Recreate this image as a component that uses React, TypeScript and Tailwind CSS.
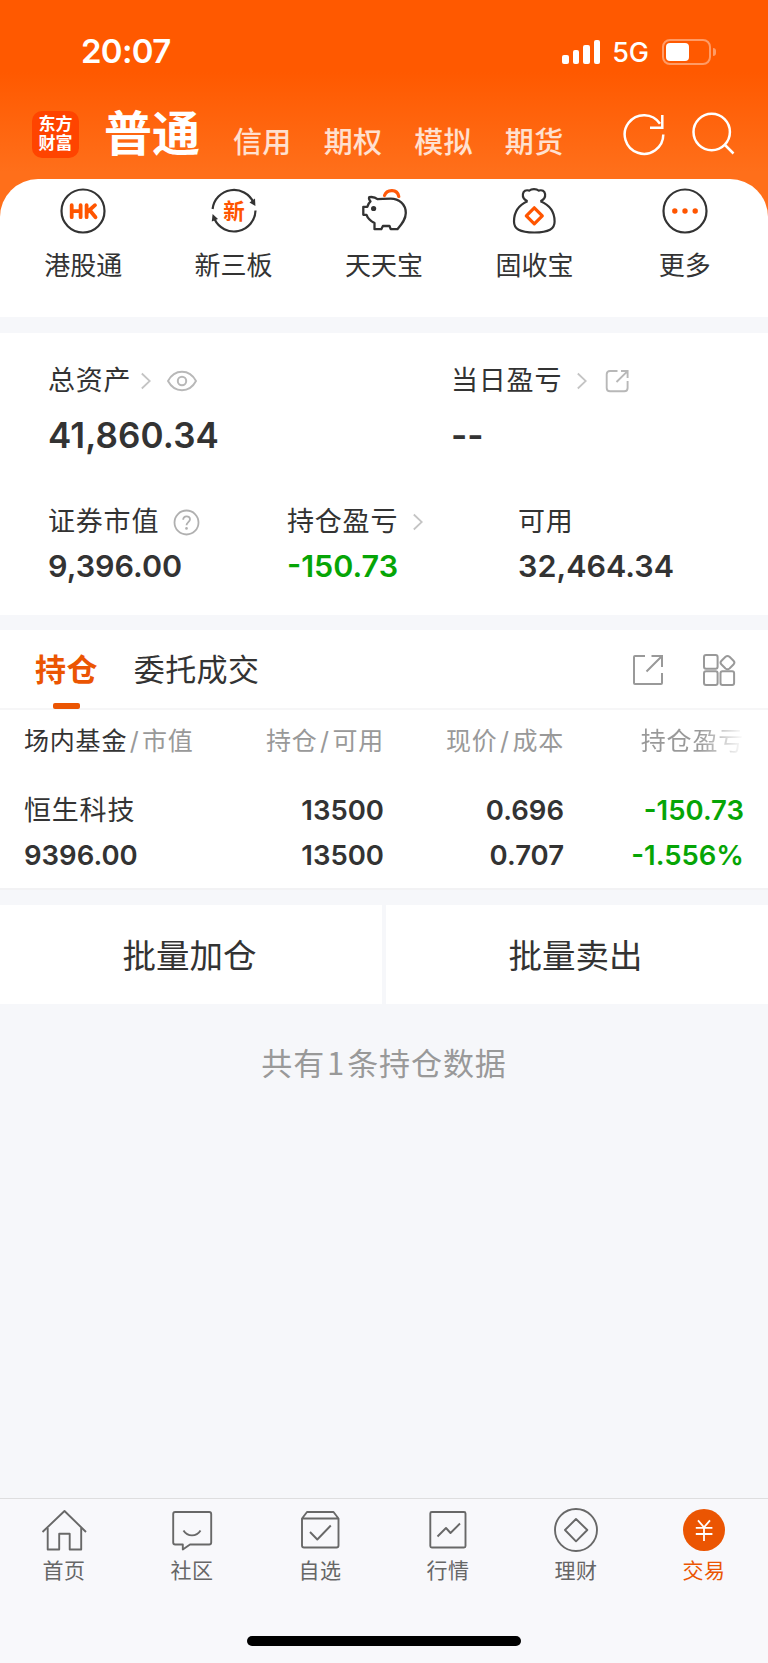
import type { ReactNode } from "react";
import clsx from "clsx";

const shortcuts = [
  { label: "港股通", icon: <HkIcon /> },
  { label: "新三板", icon: <NewBoardIcon /> },
  { label: "天天宝", icon: <PiggyIcon /> },
  { label: "固收宝", icon: <MoneyBagIcon /> },
  { label: "更多", icon: <MoreIcon /> },
];

const accountTabs = ["信用", "期权", "模拟", "期货"];

const navItems = [
  { label: "首页", icon: <HomeIcon /> },
  { label: "社区", icon: <CommunityIcon /> },
  { label: "自选", icon: <WatchlistIcon /> },
  { label: "行情", icon: <MarketIcon /> },
  { label: "理财", icon: <WealthIcon /> },
  { label: "交易", icon: <TradeIcon />, active: true },
];

const holdings = [
  {
    name: "恒生科技",
    marketValue: "9396.00",
    amount: "13500",
    available: "13500",
    price: "0.696",
    cost: "0.707",
    profit: "-150.73",
    profitRate: "-1.556%",
  },
];

function HkIcon() {
  return (
    <svg width="48" height="48" viewBox="0 0 48 48" fill="none">
      <circle cx="24" cy="24" r="21.5" stroke="#333" strokeWidth="2.2" />
      <path
        d="M12.7 18.2v12M21.6 18.2v12M12.7 24.2h8.9M27.6 18.2v12M36 18.2l-8.2 7.300M31 23.500l5.500 6.700"
        stroke="#ff5500"
        strokeWidth="3.8"
        strokeLinecap="round"
      />
    </svg>
  );
}

function NewBoardIcon() {
  return (
    <svg width="48" height="48" viewBox="0 0 48 48" fill="none">
      <path d="M2.6 22A21.5 21.5 0 0 1 43.5 15.5" stroke="#333" strokeWidth="2.2" />
      <path d="M45.5 23.5A21.5 21.5 0 0 1 4.5 32" stroke="#333" strokeWidth="2.2" />
      <path d="m39.5 15.5 5.5-4 .4 7.5z" fill="#333" />
      <path d="m1.800 34.500.8-7.500 5.400 5z" fill="#333" />
      <text
        x="24"
        y="31.5"
        textAnchor="middle"
        fontSize="21.5"
        fontWeight="700"
        fill="#ff5500"
      >
        新
      </text>
    </svg>
  );
}

function PiggyIcon() {
  return (
    <svg width="48" height="48" viewBox="0 0 48 48" fill="none">
      <path
        d="M17.500 12.200C15 10 12.500 9.600 9.200 10.200c-.8 1.600.2 2.800 1.300 4.200-1.800 1.600-2.600 3.400-3.200 5.400H3.300v8h3.200c1 2.900 3.500 5.700 8 8.300v6.100h6.800l1.600-3.200h6.600l1.200 3.200h6.800C41.500 37.500 45.800 32.500 45.800 26c0-9-7.200-14.400-15-14.400-5 0-9.100 0-13.300.6Z"
        stroke="#333"
        strokeWidth="2.3"
        strokeLinejoin="round"
      />
      <circle cx="13.6" cy="21.5" r="2.6" fill="#333" />
      <path
        d="M24.500 8.500c2-5.600 12.500-7.500 14.300 1"
        stroke="#ff5a0a"
        strokeWidth="3.2"
        strokeLinecap="round"
      />
    </svg>
  );
}

function MoneyBagIcon() {
  return (
    <svg width="48" height="48" viewBox="0 0 48 48" fill="none">
      <path
        d="M17.500 14.300c-3.500-1.600-5-4-4.600-7.100.4-3.600 3-4.600 6.600-3.600 2-2.100 7-2.100 9 0 3.600-1 6.200 0 6.600 3.600.4 3.100-1.100 5.500-4.600 7.100"
        stroke="#333"
        strokeWidth="2.2"
        strokeLinejoin="round"
      />
      <path
        d="M17.500 14.300C8 18.500 4 25.500 4 34.500 4 42 9.500 45.500 24.300 45.500S44.600 42 44.600 34.500c0-9-4-16-14.100-20.200"
        stroke="#333"
        strokeWidth="2.2"
      />
      <path
        d="m24.300 20.800 8 8-8 8-8-8z"
        stroke="#ff5500"
        strokeWidth="3.2"
        strokeLinejoin="round"
      />
    </svg>
  );
}

function MoreIcon() {
  return (
    <svg width="48" height="48" viewBox="0 0 48 48" fill="none">
      <circle cx="24" cy="24" r="21.5" stroke="#333" strokeWidth="2.2" />
      <circle cx="13.8" cy="24" r="2.7" fill="#ff5500" />
      <circle cx="24" cy="24" r="2.7" fill="#ff5500" />
      <circle cx="34.2" cy="24" r="2.7" fill="#ff5500" />
    </svg>
  );
}

function Chevron() {
  return (
    <svg width="10" height="18" viewBox="0 0 10 18" fill="none">
      <path d="m.8 1.500 8 7.500-8 7.500" stroke="#c4c4c4" strokeWidth="1.8" />
    </svg>
  );
}

function EyeIcon() {
  return (
    <svg width="30" height="22" viewBox="0 0 30 22" fill="none" stroke="#b8b8b8">
      <path
        d="M1 11C4.500 4.500 9.500 1.800 15 1.800S25.500 4.500 29 11c-3.500 6.500-8.500 9.200-14 9.200S4.500 17.500 1 11Z"
        strokeWidth="1.9"
        strokeLinejoin="round"
      />
      <circle cx="15" cy="11" r="4.2" strokeWidth="2" />
    </svg>
  );
}

function ShareIcon() {
  return (
    <svg width="24" height="24" viewBox="0 0 24 24" fill="none" stroke="#b8b8b8" strokeWidth="1.9">
      <path d="M12.500 2H5Q1.700 2 1.700 5.300V19Q1.700 22.300 5 22.300H19.300Q22.600 22.300 22.600 19V12" />
      <path d="M16 2h6.600v7M22.300 2.300 11.500 13" />
    </svg>
  );
}

function HelpIcon() {
  return (
    <svg width="27" height="27" viewBox="0 0 27 27" fill="none" stroke="#b0b0b0">
      <circle cx="13.5" cy="13.5" r="12" strokeWidth="1.8" />
      <path
        d="M10.200 10.800c0-4.600 6.800-4.600 6.800-.5 0 2.700-3.500 3-3.500 6"
        strokeWidth="1.8"
      />
      <circle cx="13.5" cy="19.4" r="1.3" fill="#b0b0b0" stroke="none" />
    </svg>
  );
}

function OpenIcon() {
  return (
    <svg width="32" height="32" viewBox="0 0 32 32" fill="none" stroke="#999" strokeWidth="2">
      <path d="M13 2H3Q2 2 2 3v26q0 1 1 1h26q1 0 1-1V19" />
      <path d="M19.500 2H30v11M30 2 14.500 17.500" />
    </svg>
  );
}

function GridIcon() {
  return (
    <svg width="34" height="34" viewBox="0 0 34 34" fill="none" stroke="#999" strokeWidth="2">
      <rect x="2" y="2" width="13.6" height="13.8" rx="2" />
      <rect x="2" y="18.2" width="13.6" height="13.8" rx="2" />
      <rect x="18.5" y="18.2" width="13.6" height="13.8" rx="2" />
      <path d="m27.500 3.700 4 4q1.900 1.900 0 3.800l-4 4q-2 1.500-4 0l-4-4q-1.900-1.900 0-3.800l4-4q2-1.500 4 0Z" />
    </svg>
  );
}

function NavSvg({ children }: { children: ReactNode }) {
  return (
    <svg
      width="46"
      height="46"
      viewBox="0 0 46 46"
      fill="none"
      stroke="#686868"
      strokeWidth="1.9"
      strokeLinejoin="round"
    >
      {children}
    </svg>
  );
}

function HomeIcon() {
  return (
    <NavSvg>
      <path d="M1.500 25 23.500 4 45 25" />
      <path d="M6.700 21v21.500h11.500V26.700h10.500v15.800h11.500V21" />
    </NavSvg>
  );
}

function CommunityIcon() {
  return (
    <NavSvg>
      <path d="M6.200 5h34q2 0 2 2v28.500q0 2-2 2H21L13.800 42.500v-5H6.200q-2 0-2-2V7q0-2 2-2Z" />
      <path d="M14.500 23.500c4 6.500 13 6.500 17 0" />
    </NavSvg>
  );
}

function WatchlistIcon() {
  return (
    <NavSvg>
      <path d="M5 11.500 10 5h26.500l5 6.500v27q0 2-2 2H7q-2 0-2-2ZM5 11.500h36.500" />
      <path d="m13 25 7.300 7.500L33.800 18.500" />
    </NavSvg>
  );
}

function MarketIcon() {
  return (
    <NavSvg>
      <rect x="5.3" y="5" width="35.2" height="35.5" rx="1.5" />
      <path d="m12.500 29.500 8.500-8.500 4.500 5L35 16.500" />
    </NavSvg>
  );
}

function WealthIcon() {
  return (
    <NavSvg>
      <circle cx="23" cy="23" r="21" />
      <path d="M23 12 34.300 23 23 34.300 12 23Z" />
    </NavSvg>
  );
}

function TradeIcon() {
  return (
    <svg width="46" height="46" viewBox="0 0 46 46" fill="none">
      <circle cx="23" cy="23" r="21" fill="#eb5502" />
      <path
        d="m17 13.300 6 7 6-7M23 20.300V34M14.800 20.800h16.600M14.800 27h16.600"
        stroke="#fff"
        strokeWidth="1.8"
      />
    </svg>
  );
}

function StatusBar() {
  return (
    <div className="flex h-[104px] items-center justify-between pr-[52px] pl-[81px]">
      <span className="text-[33px] font-semibold tracking-[-0.7px]">20:07</span>
      <div className="flex items-center">
        <div className="flex items-end gap-1">
          <i className="h-[9px] w-[6.5px] rounded-[2px] bg-white" />
          <i className="h-[14px] w-[6.5px] rounded-[2px] bg-white" />
          <i className="h-[19px] w-[6.5px] rounded-[2px] bg-white" />
          <i className="h-6 w-[6.5px] rounded-[2px] bg-white" />
        </div>
        <span className="ml-3 text-[27px] leading-none font-medium">5G</span>
        <div className="ml-[13px] h-[26px] w-[49px] rounded-lg border-2 border-white/40 p-[2px]">
          <div className="h-full w-[23px] rounded-[4px] bg-white" />
        </div>
        <div className="ml-[2px] h-2 w-[3px] rounded-r-full bg-white/40" />
      </div>
    </div>
  );
}

function Header() {
  return (
    <header className="h-[220px] bg-[linear-gradient(#ff5900_0,#ff5900_72px,#ff6f1a_172px,#ff6f1a_100%)] text-white">
      <StatusBar />
      <div className="flex h-[60px] items-center">
        <div className="ml-8 flex h-[47px] w-[47px] flex-col justify-center rounded-[10px] bg-[#ff4400] text-center text-[17px] leading-[19.5px] font-bold">
          <span>东方</span>
          <span>财富</span>
        </div>
        <h1 className="ml-[25px] text-[48px] leading-[60px] font-bold">普通</h1>
        <nav className="mt-[17px] ml-[33px] flex gap-8 text-[29px] leading-[34px] font-medium tracking-[0.3px] text-white/80">
          {accountTabs.map((tab) => (
            <span key={tab}>{tab}</span>
          ))}
        </nav>
        <svg className="ml-[59px]" width="44" height="46" viewBox="0 0 44 46" fill="none" stroke="#fff" strokeWidth="2.5">
          <path d="M41.300 23.500A19.300 19.300 0 1 1 38 12.700" />
          <path d="M40.300 4v12.800H28" />
        </svg>
        <svg className="ml-[25px]" width="46" height="46" viewBox="0 0 46 46" fill="none" stroke="#fff" strokeWidth="2.5">
          <circle cx="20.7" cy="21" r="18.2" />
          <path d="m33.500 33.500 9 9" />
        </svg>
      </div>
    </header>
  );
}

function Label({ text, children }: { text: string; children?: ReactNode }) {
  return (
    <div className="flex h-8 items-center text-[27px] tracking-[0.8px]">
      <span>{text}</span>
      {children}
    </div>
  );
}

function Assets() {
  return (
    <section className="mt-4 h-[282px] bg-white pt-8 pl-12">
      <div className="flex">
        <div className="w-[403px]">
          <Label text="总资产">
            <span className="ml-[10px]"><Chevron /></span>
            <span className="ml-4"><EyeIcon /></span>
          </Label>
          <p className="mt-[18px] text-[35px] leading-[40px] font-semibold tracking-[0.1px]">41,860.34</p>
        </div>
        <div>
          <Label text="当日盈亏">
            <span className="ml-[15px]"><Chevron /></span>
            <span className="ml-[18px]"><ShareIcon /></span>
          </Label>
          <p className="mt-[18px] text-[35px] leading-[40px] font-semibold">--</p>
        </div>
      </div>
      <div className="mt-[51px] flex">
        <div className="w-[239px]">
          <Label text="证券市值">
            <span className="ml-[14px]"><HelpIcon /></span>
          </Label>
          <p className="mt-[10px] text-[30.5px] leading-[36px] font-semibold">9,396.00</p>
        </div>
        <div className="w-[231px]">
          <Label text="持仓盈亏">
            <span className="ml-[15px]"><Chevron /></span>
          </Label>
          <p className="mt-[10px] text-[30.5px] leading-[36px] font-semibold text-[#06a506]">-150.73</p>
        </div>
        <div>
          <Label text="可用" />
          <p className="mt-[10px] text-[30.5px] leading-[36px] font-semibold">32,464.34</p>
        </div>
      </div>
    </section>
  );
}

function Slash() {
  return <span className="px-[2.5px]">/</span>;
}

function Holdings() {
  return (
    <section className="mt-[15px] h-[260px] border-b-2 border-[#f2f2f4] bg-white">
      <div className="flex h-20 items-center border-b-2 border-[#f6f6f7] text-[31px] tracking-[0.4px]">
        <div className="relative ml-[35px] flex h-20 items-center pt-[2px] font-bold text-[#eb5502]">
          持仓
          <div className="absolute bottom-0 left-[18px] h-[6px] w-[27px] rounded-[2px] bg-[#eb5502]" />
        </div>
        <span className="mt-[2px] ml-9">委托成交</span>
        <div className="mt-[2px] ml-auto flex items-center gap-[38px] pr-[32px]">
          <OpenIcon />
          <GridIcon />
        </div>
      </div>
      <div className="grid h-[64px] grid-cols-[219px_141px_180px_180px] items-center pl-6 text-right text-[25px] tracking-[0.8px] text-[#999]">
        <span className="text-left">
          <span className="text-[#333]">场内基金</span>
          <Slash />
          市值
        </span>
        <span>持仓<Slash />可用</span>
        <span>现价<Slash />成本</span>
        <span className="bg-linear-to-r from-[#999] from-75% to-white bg-clip-text text-transparent">
          持仓盈亏
        </span>
      </div>
      {holdings.map((item) => (
        <div
          key={item.name}
          className="mt-[14px] grid grid-cols-[219px_141px_180px_180px] pl-6 text-right text-[27.5px] leading-[44.5px] font-semibold"
        >
          <span className="pt-px text-left text-[27px] leading-[43.5px] font-normal tracking-[0.8px]">
            {item.name}
          </span>
          <span>{item.amount}</span>
          <span>{item.price}</span>
          <span className="text-[#06a506]">{item.profit}</span>
          <span className="text-left">{item.marketValue}</span>
          <span>{item.available}</span>
          <span>{item.cost}</span>
          <span className="text-[#06a506]">{item.profitRate}</span>
        </div>
      ))}
    </section>
  );
}

function BottomNav() {
  return (
    <footer className="mt-auto h-[165px] border-t border-[#dededf] bg-[#f8f8fb]">
      <div className="grid grid-cols-6 pt-2">
        {navItems.map((item) => (
          <div
            key={item.label}
            className={clsx(
              "flex flex-col items-center text-[21px] leading-[30px] tracking-[0.5px]",
              item.active ? "text-[#eb5502]" : "text-[#666]"
            )}
          >
            {item.icon}
            <span className="mt-[3px]">{item.label}</span>
          </div>
        ))}
      </div>
      <div className="mx-auto mt-[50px] h-[10px] w-[274px] rounded-full bg-black" />
    </footer>
  );
}

export default function App() {
  return (
    <div className="flex h-[1663px] w-[768px] flex-col overflow-hidden bg-[#f6f7fa] font-['Inter','Noto_Sans_CJK_SC',sans-serif] text-[#333]">
      <Header />
      <section className="-mt-[41px] flex h-[138px] rounded-t-[38px] bg-white px-2 pt-2">
        {shortcuts.map((item) => (
          <div key={item.label} className="flex flex-1 flex-col items-center">
            {item.icon}
            <span className="mt-[15px] text-[26px] leading-8">{item.label}</span>
          </div>
        ))}
      </section>
      <Assets />
      <Holdings />
      <div className="mt-[15px] grid h-[99px] grid-cols-2 gap-1 text-[33.5px]">
        <div className="flex items-center justify-center bg-white pt-[3px] pr-[3px]">批量加仓</div>
        <div className="flex items-center justify-center bg-white pt-[3px] pr-[3px]">批量卖出</div>
      </div>
      <p className="mt-[38px] text-center text-[31px] leading-[40px] tracking-[0.9px] text-[#999]">
        共有<span className="px-[2px] font-['Noto_Sans_CJK_SC']">1</span>条持仓数据
      </p>
      <BottomNav />
    </div>
  );
}
